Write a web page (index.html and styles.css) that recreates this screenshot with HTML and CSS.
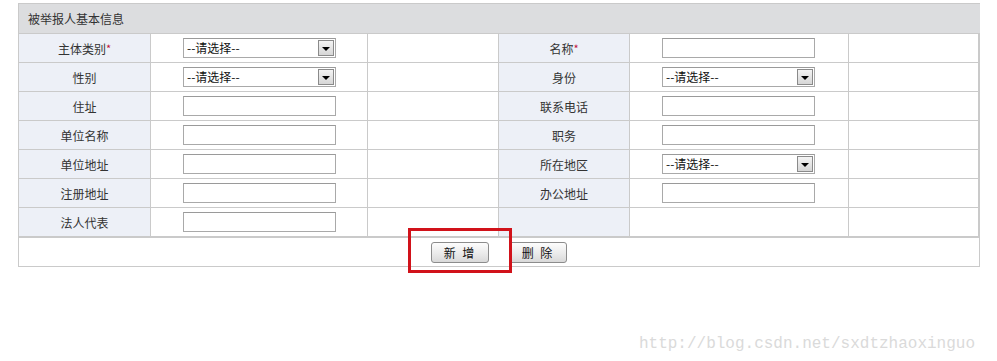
FILE: index.html
```html
<!DOCTYPE html>
<html lang="zh-CN">
<head>
    <meta charset="UTF-8">
    <title>被举报人基本信息</title>
    <link rel="stylesheet" href="styles.css">
</head>
<body>
    <div class="panel">
        <div class="panel-head">被举报人基本信息</div>
        <div class="form-grid">
            <div class="label">主体类别<span class="req">*</span></div>
            <div class="field"><div class="select"><span class="select-text">--请选择--</span><span class="arrow"></span></div></div>
            <div class="blank"></div>
            <div class="label">名称<span class="req">*</span></div>
            <div class="field"><input type="text" class="text"></div>
            <div class="blank last"></div>

            <div class="label">性别</div>
            <div class="field"><div class="select"><span class="select-text">--请选择--</span><span class="arrow"></span></div></div>
            <div class="blank"></div>
            <div class="label">身份</div>
            <div class="field"><div class="select"><span class="select-text">--请选择--</span><span class="arrow"></span></div></div>
            <div class="blank last"></div>

            <div class="label">住址</div>
            <div class="field"><input type="text" class="text"></div>
            <div class="blank"></div>
            <div class="label">联系电话</div>
            <div class="field"><input type="text" class="text"></div>
            <div class="blank last"></div>

            <div class="label">单位名称</div>
            <div class="field"><input type="text" class="text"></div>
            <div class="blank"></div>
            <div class="label">职务</div>
            <div class="field"><input type="text" class="text"></div>
            <div class="blank last"></div>

            <div class="label">单位地址</div>
            <div class="field"><input type="text" class="text"></div>
            <div class="blank"></div>
            <div class="label">所在地区</div>
            <div class="field"><div class="select"><span class="select-text">--请选择--</span><span class="arrow"></span></div></div>
            <div class="blank last"></div>

            <div class="label">注册地址</div>
            <div class="field"><input type="text" class="text"></div>
            <div class="blank"></div>
            <div class="label">办公地址</div>
            <div class="field"><input type="text" class="text"></div>
            <div class="blank last"></div>

            <div class="label">法人代表</div>
            <div class="field"><input type="text" class="text"></div>
            <div class="blank"></div>
            <div class="label"></div>
            <div class="field"></div>
            <div class="blank last"></div>
        </div>
        <div class="actions">
            <button class="btn">新 增</button>
            <button class="btn">删 除</button>
            <div class="mark"></div>
        </div>
    </div>
    <div class="watermark">http://blog.csdn.net/sxdtzhaoxinguo</div>
</body>
</html>
```

FILE: styles.css
```css
body {
    margin: 0;
    padding: 3px 0 0 18px;
    font-family: "Noto Sans CJK SC", "Liberation Sans", sans-serif;
    font-size: 12px;
    color: #333;
    background: #fff;
}
.panel {
    width: 962px;
}
.panel-head {
    height: 29px;
    line-height: 29px;
    padding-left: 9px;
    background: #dcdddf;
    border: 1px solid #cacaca;
    border-right: 0;
    color: #333;
}
.form-grid {
    display: grid;
    grid-template-columns: 132px 217px 131px 131px 219px 131px;
    grid-auto-rows: 29px;
    border-left: 1px solid #cacaca;
    border-bottom: 1px solid #cacaca;
}
.form-grid > div {
    box-sizing: border-box;
    border-right: 1px solid #cacaca;
    border-bottom: 1px solid #cacaca;
}
.form-grid > .last {
    border-right: 2px solid #cacaca;
}
.label {
    background: #edf0f7;
    display: flex;
    align-items: center;
    justify-content: center;
    color: #333;
}
.req {
    color: #c0143c;
    font-size: 11px;
    align-self: flex-start;
    margin-top: 6px;
}
.field {
    display: flex;
    align-items: center;
    padding-left: 32px;
}
.text {
    box-sizing: border-box;
    width: 153px;
    height: 20px;
    margin: 0;
    padding: 0 3px;
    border: 1px solid #a9a9a9;
    border-top-color: #9a9a9a;
    background: #fff;
}
.select {
    box-sizing: border-box;
    width: 153px;
    height: 20px;
    border: 1px solid #a9a9a9;
    border-top-color: #9a9a9a;
    display: flex;
    align-items: center;
    justify-content: space-between;
    padding: 0 1px 0 3px;
    background: #fff;
    color: #111;
}
.select-text {
    line-height: 16px;
}
.arrow {
    box-sizing: border-box;
    width: 16px;
    height: 16px;
    border: 1px solid #8a8a8a;
    background: linear-gradient(#f4f4f4, #d6d6d6);
    display: flex;
    align-items: center;
    justify-content: center;
}
.arrow::after {
    content: "";
    border-left: 4px solid transparent;
    border-right: 4px solid transparent;
    border-top: 4px solid #000;
    margin-top: 1px;
}
.actions {
    position: relative;
    height: 28px;
    border: 1px solid #cacaca;
    border-top: 0;
    display: flex;
    justify-content: center;
    align-items: center;
    gap: 20px;
}
.btn {
    width: 58px;
    height: 21px;
    padding: 0;
    border: 1px solid #8c8c8c;
    border-radius: 3px;
    background: linear-gradient(#fdfdfd, #e9e9e9 60%, #d9d9d9);
    font-family: "Noto Sans CJK SC", sans-serif;
    font-size: 12px;
    color: #111;
    letter-spacing: 2px;
}
.mark {
    position: absolute;
    left: 389px;
    top: -10px;
    width: 98px;
    height: 39px;
    border: 3px solid #d1121a;
}
.watermark {
    margin: 68px 22px 0 0;
    text-align: right;
    font-family: "Liberation Mono", monospace;
    font-size: 16px;
    color: #dadada;
}
```
